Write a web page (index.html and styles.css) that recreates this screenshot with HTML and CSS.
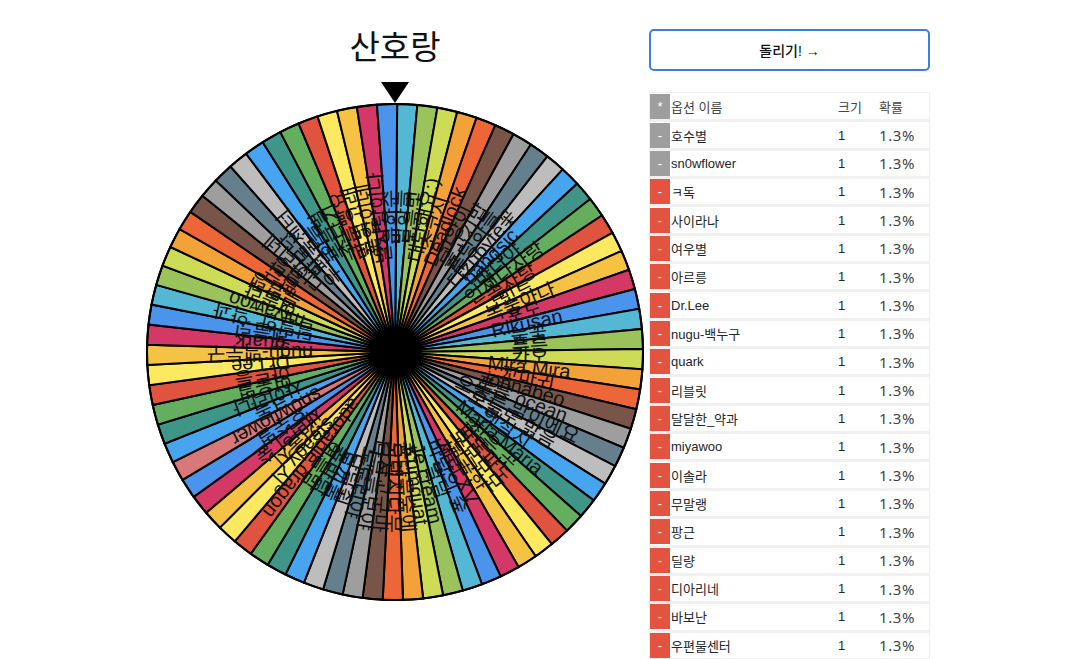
FILE: index.html
```html
<!DOCTYPE html>
<html lang="ko">
<head>
    <meta charset="UTF-8">
    <meta name="viewport" content="width=device-width, initial-scale=1.0">
    <title>산호랑</title>
    <link rel="stylesheet" href="styles.css">
</head>
<body>

<div id="app">
    <div id="wheel-area">
        <h1 class="wheel-title">산호랑</h1>
        <div class="pointer"></div>
        <svg id="wheel" width="500" height="500" viewBox="-250 -250 500 500"></svg>
    </div>
    <div id="side-panel">
        <button class="spin-button">돌리기! →</button>
        <table id="options">
            <thead>
                <tr>
                    <th class="col-action"><button class="row-button muted">*</button></th>
                    <th class="col-name">옵션 이름</th>
                    <th class="col-size">크기</th>
                    <th class="col-prob">확률</th>
                </tr>
            </thead>
            <tbody id="option-rows"></tbody>
        </table>
    </div>
</div>

<script src="script.js"></script>
</body>
</html>
```

FILE: styles.css
```css
html, body {
    height: 100%;
    overflow: hidden;
}
body {
    margin: 0;
    background-color: white;
    color: #212529;
    font-family: "Liberation Sans", "Noto Sans CJK KR", sans-serif;
}
#app {
    display: flex;
    gap: 4px;
    padding-left: 145px;
}
#wheel-area {
    display: flex;
    flex-direction: column;
    align-items: center;
    width: 500px;
    padding-top: 21px;
}
.wheel-title {
    margin: 0 0 7px;
    font-size: 33px;
    font-weight: normal;
    line-height: 54px;
    color: #111;
}
.pointer {
    width: 0;
    height: 0;
    margin-bottom: -1px;
    border-left: 14px solid transparent;
    border-right: 14px solid transparent;
    border-top: 21px solid black;
    position: relative;
    z-index: 1;
}
#wheel {
    display: block;
}
#wheel text {
    font-size: 20px;
    fill: #111;
    text-anchor: middle;
    dominant-baseline: central;
}
#side-panel {
    width: 281px;
    padding-top: 29px;
}
.spin-button {
    display: block;
    width: 100%;
    height: 42px;
    margin-bottom: 21px;
    padding: 0;
    border: 2px solid #3a7fdc;
    border-radius: 5px;
    background-color: white;
    color: #111;
    font-family: inherit;
    font-size: 14px;
    font-weight: 500;
    cursor: pointer;
}
#options {
    width: 281px;
    table-layout: fixed;
    border-collapse: collapse;
    border: 1px solid #f0f0f0;
    font-size: 13px;
}
#options tr {
    height: 28.35px;
    border-bottom: 3px solid #f0f0f0;
}
#options th,
#options td {
    padding: 0;
    font-weight: normal;
    text-align: left;
}
#options th {
    color: #444;
}
.col-action {
    width: 21px;
}
.col-size {
    width: 41px;
}
.col-prob {
    width: 50px;
}
.prob {
    font-family: "Noto Sans", sans-serif;
    font-size: 15px;
    font-weight: 300;
    letter-spacing: 0.6px;
    color: #444;
}
.row-button {
    display: block;
    width: 20px;
    height: 25px;
    padding: 0;
    border: none;
    background-color: #e25440;
    color: white;
    font-family: inherit;
    font-size: 13px;
    cursor: pointer;
}
.row-button.muted {
    background-color: #9e9e9e;
}
```

FILE: script.js
```js
const names = [
    '호수별', 'sn0wflower', 'ㅋ독', '사이라나', '여우별', '아르릉', 'Dr.Lee', 'nugu-백누구', 'quark', '리블릿',
    '달달한_약과', 'miyawoo', '이솔라', '무말랭', '팡근', '딜량', '디아리네', '바보난', '우편물센터',
    '하늘', '푸른별', '소나기', '구름빵요', '달빛고래', '꽃잎이네', '별사탕이다', '은하수',
    '밤하늘', '노을빛', '대단해요:)', '초코시', 'Deadlock', '고양이', '물고기밥', '푸딩하늘', '다zubyte꽃', 'bangsic',
    '바다야', '언제나사랑', '솜사탕', '민트', '복숭아나', '포도', 'Rikusan', '눈꽃', '푸른', '카오',
    'Mira Mira', '꼬마귀', 'johnabeo', '푸른 ocean', '오늘은 밤이에요', '오늘도 맑음', '햇살지', 'Maria Maria',
    '작은 곳', '파도파도', '모모모모', '달콤한', '체리 XV', '바람의 숲', '별님', 'Je cream', 'Kumquat',
    '귤나무숲에', '오렌지나무', '감자고구마', '나무늘보야', '도토리야', '다람쥐', '토끼풀', '봄바람', '여름밤',
    'adorable dragon', 'steady 시', '겨울지', '새벽의 숲'
];

const optionColors = [
    '#54b7d3', '#9ac35c', '#cddb57', '#f3a23a', '#ed6637', '#785548', '#9e9e9e', '#657f8c', '#bdbdbd',
    '#47a4ee', '#3f9688', '#66ae5f', '#e0533f', '#fde95f', '#f6c243', '#d33866', '#4a94ec'
];

const SVG_NS = 'http://www.w3.org/2000/svg';
const RADIUS = 248;
const TEXT_RADIUS = 135;
const START = 0.5;
const VISIBLE_ROWS = 19;
const wheel = document.getElementById('wheel');
const rows = document.getElementById('option-rows');
const step = 360 / names.length;

function point(angle, r) {
    const rad = angle * Math.PI / 180;
    return (r * Math.sin(rad)).toFixed(2) + ' ' + (-r * Math.cos(rad)).toFixed(2);
}

function addShape(tag, attrs) {
    const el = document.createElementNS(SVG_NS, tag);
    Object.keys(attrs).forEach(key => el.setAttribute(key, attrs[key]));
    wheel.appendChild(el);
    return el;
}

// 칸 번호 0은 포인터 바로 오른쪽 칸, 호수별은 50번 칸
function sliceColor(k) {
    if (k === 51) return '#d97878';
    return optionColors[(k <= 50 ? k : k - 43) % optionColors.length];
}

for (let k = 0; k < names.length; k++) {
    const a = START + k * step;
    addShape('path', {
        d: 'M0 0 L' + point(a, RADIUS) + ' A' + RADIUS + ' ' + RADIUS + ' 0 0 1 ' + point(a + step, RADIUS) + ' Z',
        fill: sliceColor(k),
        stroke: 'black',
        'stroke-width': 2
    });
}

addShape('circle', { r: RADIUS, fill: 'none', stroke: 'black', 'stroke-width': 2 });
addShape('circle', { r: 25, fill: 'black' });

names.forEach((name, i) => {
    const k = (i + 50) % names.length;
    const mid = START + (k + 0.5) * step;
    const label = addShape('text', {
        x: TEXT_RADIUS,
        y: 0,
        transform: 'rotate(' + (mid - 90).toFixed(3) + ')'
    });
    label.textContent = name;

    if (i < VISIBLE_ROWS) {
        const tr = document.createElement('tr');
        const muted = i < 2 ? ' muted' : '';
        tr.innerHTML = '<td><button class="row-button' + muted + '">-</button></td>' +
            '<td>' + name + '</td><td>1</td><td class="prob">1.3%</td>';
        rows.appendChild(tr);
    }
});
```
